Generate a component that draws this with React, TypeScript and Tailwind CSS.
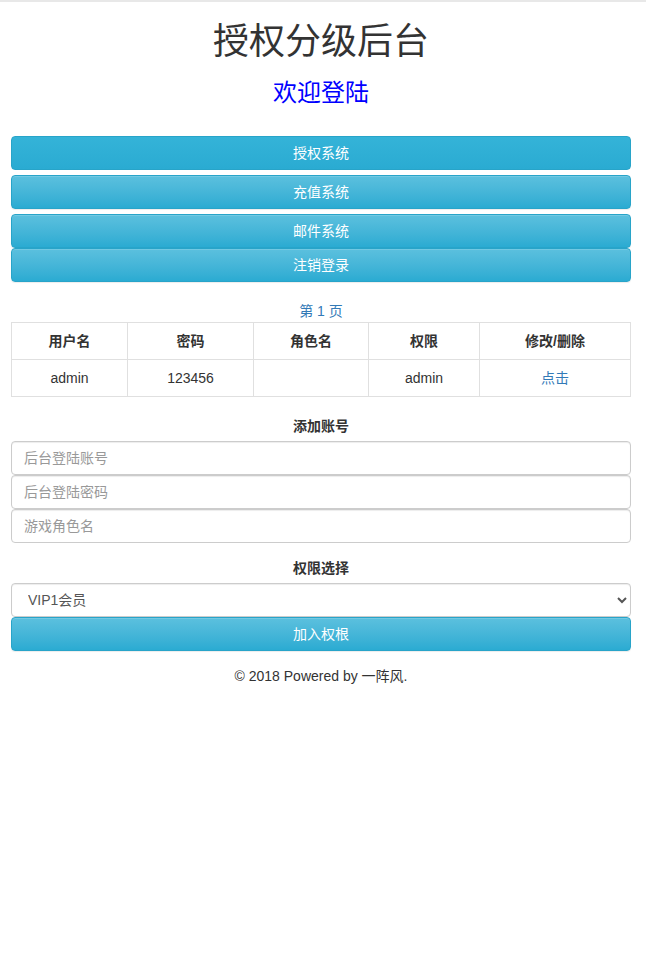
import React from "react";

const font = { fontFamily: '"Liberation Sans", "Noto Sans CJK SC", sans-serif' };

const rows = [{ user: "admin", pass: "123456", role: "", level: "admin" }];

const btn =
  "block w-full h-[34px] rounded-[4px] border border-[#28a4c9] bg-gradient-to-b from-[#5bc0de] to-[#2aabd2] text-white text-[14px] leading-[20px] text-center shadow-[inset_0_1px_0_rgba(255,255,255,0.15),0_1px_1px_rgba(0,0,0,0.075)]";

const input =
  "block w-full h-[34px] rounded-[4px] border border-[#ccc] bg-white px-3 text-[14px] text-[#555] placeholder:text-[#999] shadow-[inset_0_1px_1px_rgba(0,0,0,0.075)] outline-none";

export default function App() {
  return (
    <div className="min-h-[958px] bg-white border-t-2 border-[#e8e8e8] text-[#333] text-[14px] leading-[20px]" style={font}>
      <div className="pl-[11px] pr-[15px]">
        <h1 className="text-center text-[36px] leading-[40px] mt-[20px] mb-[18px] font-normal">授权分级后台</h1>
        <h3 className="text-center text-[24px] leading-[26px] text-[#0000ff] mb-[30px]">欢迎登陆</h3>

        <div className="flex flex-col">
          <button className="block w-full h-[34px] rounded-[4px] border border-[#28a4c9] bg-gradient-to-b from-[#34b3d8] to-[#2aabd2] text-white text-[14px] leading-[20px]">
            授权系统
          </button>
          <button className={btn + " mt-[5px]"}>充值系统</button>
          <button className={btn + " mt-[5px]"}>邮件系统</button>
          <button className={btn}>注销登录</button>
        </div>

        <div className="mt-[19px] text-center text-[#337ab7]">第 1 页</div>

        <table className="mt-[1px] w-full border-collapse border border-[#e0e0e0]">
          <thead>
            <tr>
              <th className="w-[116px] border border-[#e0e0e0] p-2 font-bold">用户名</th>
              <th className="w-[126px] border border-[#e0e0e0] p-2 font-bold">密码</th>
              <th className="w-[115px] border border-[#e0e0e0] p-2 font-bold">角色名</th>
              <th className="w-[111px] border border-[#e0e0e0] p-2 font-bold">权限</th>
              <th className="border border-[#e0e0e0] p-2 font-bold">修改/删除</th>
            </tr>
          </thead>
          <tbody>
            {rows.map((r, i) => (
              <tr key={i}>
                <td className="border border-[#e0e0e0] p-2 text-center">{r.user}</td>
                <td className="border border-[#e0e0e0] p-2 text-center">{r.pass}</td>
                <td className="border border-[#e0e0e0] p-2 text-center">{r.role}</td>
                <td className="border border-[#e0e0e0] p-2 text-center">{r.level}</td>
                <td className="border border-[#e0e0e0] p-2 text-center">
                  <a className="text-[#337ab7]">点击</a>
                </td>
              </tr>
            ))}
          </tbody>
        </table>

        <div className="mt-[19px] mb-[5px] text-center font-bold">添加账号</div>
        <input className={input} placeholder="后台登陆账号" />
        <input className={input} placeholder="后台登陆密码" />
        <input className={input} placeholder="游戏角色名" />

        <div className="mt-[15px] mb-[5px] text-center font-bold">权限选择</div>
        <select className="block w-full h-[34px] rounded-[4px] border border-[#ccc] bg-white px-3 text-[14px] text-[#555] shadow-[inset_0_1px_1px_rgba(0,0,0,0.075)] outline-none">
          <option>VIP1会员</option>
          <option>VIP2会员</option>
          <option>admin</option>
        </select>
        <button className={btn}>加入权根</button>

        <div className="mt-[15px] text-center">© 2018 Powered by 一阵风.</div>
      </div>
    </div>
  );
}
